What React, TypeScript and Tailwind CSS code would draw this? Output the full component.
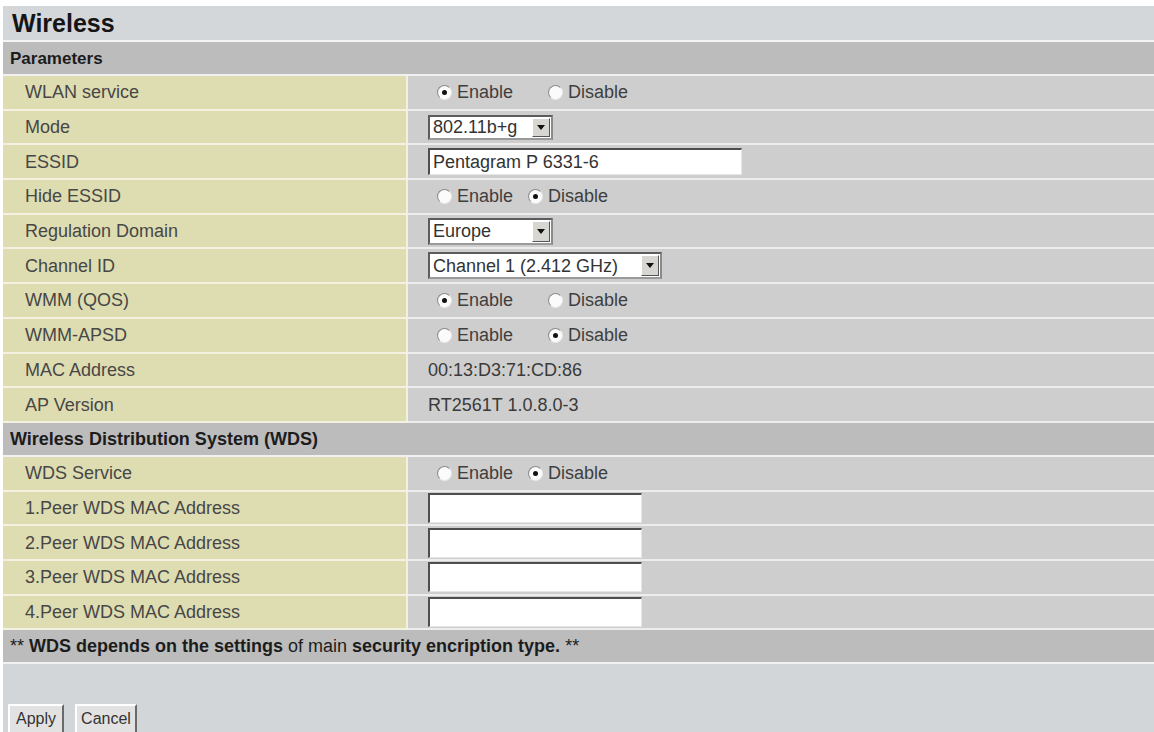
import type { ReactNode } from 'react'

function Radio({ checked }: { checked: boolean }) {
  return (
    <span className="w-[15px] h-[15px] shrink-0 rounded-full bg-[#fbfbfb] border border-t-[#8a8a8a] border-l-[#8a8a8a] border-r-[#e8e8e8] border-b-[#e8e8e8] flex items-center justify-center">
      {checked && <span className="w-[5px] h-[5px] rounded-full bg-[#111]" />}
    </span>
  )
}

function EnableDisable({ enabled, wide }: { enabled: boolean; wide?: boolean }) {
  return (
    <div className="flex items-center ml-[9px] text-[#3e3e3e]">
      <Radio checked={enabled} />
      <span className="ml-[5px]">Enable</span>
      <span className={wide ? 'ml-[35px]' : 'ml-[15px]'}>
        <Radio checked={!enabled} />
      </span>
      <span className="ml-[5px]">Disable</span>
    </div>
  )
}

function Select({ value, className }: { value: string; className: string }) {
  return (
    <div className={`flex items-stretch bg-white border-2 border-[#5c5c5c] border-b-[#9a9a9a] border-r-[#8a8a8a] ${className}`}>
      <span className="flex-1 flex items-center pl-[3px] text-[#333] whitespace-nowrap overflow-hidden">{value}</span>
      <span className="w-[18px] my-[1px] mr-[1px] bg-[#d8d6d0] border border-t-white border-l-white border-r-[#555] border-b-[#555] flex items-center justify-center">
        <svg width="8" height="5" viewBox="0 0 8 5">
          <path d="M0 0h8L4 5z" fill="#111" />
        </svg>
      </span>
    </div>
  )
}

function TextBox({ value, className }: { value?: string; className: string }) {
  return (
    <div className={`flex items-center bg-white border-t-2 border-l-2 border-[#4e4e4e] border-r border-b border-r-[#e6e6e6] border-b-[#e6e6e6] pl-[3px] text-[#333] ${className}`}>
      {value}
    </div>
  )
}

function Row({ label, children }: { label: string; children?: ReactNode }) {
  return (
    <div className="flex h-[34.7px]">
      <div className="w-[405px] shrink-0 flex items-center pl-[22px] bg-[#dedcb1] border-b-2 border-r-2 border-b-[#f3f2e2] border-r-[#f2f1dc] text-[#474747]">
        {label}
      </div>
      <div className="flex-1 flex items-center pl-[20px] bg-[#cecece] border-b-2 border-[#ededed] text-[#3a3a3a]">
        {children}
      </div>
    </div>
  )
}

function SectionBar({ children }: { children: ReactNode }) {
  return (
    <div className="h-[34px] flex items-center pl-[7px] bg-[#bcbcbc] border-b-2 border-[#f1f1f1] text-[#1c1c1c]">
      {children}
    </div>
  )
}

export default function App() {
  return (
    <div className="w-[1154px] h-[732px] overflow-hidden bg-white pt-[6px] pl-[3px] text-[18px] leading-none font-['Liberation_Sans',Arial,sans-serif]">
      <div className="h-[36px] flex items-center pl-[9px] bg-[#d3d7da] border-b-2 border-[#f4f4f4]">
        <span className="text-[25px] font-bold text-[#151515]">Wireless</span>
      </div>
      <SectionBar>
        <span className="font-bold text-[17px]">Parameters</span>
      </SectionBar>

      <Row label="WLAN service">
        <EnableDisable enabled wide />
      </Row>
      <Row label="Mode">
        <Select value="802.11b+g" className="w-[125px] h-[25px]" />
      </Row>
      <Row label="ESSID">
        <TextBox value="Pentagram P 6331-6" className="w-[314px] h-[27px]" />
      </Row>
      <Row label="Hide ESSID">
        <EnableDisable enabled={false} />
      </Row>
      <Row label="Regulation Domain">
        <Select value="Europe" className="w-[125px] h-[27px]" />
      </Row>
      <Row label="Channel ID">
        <Select value="Channel 1 (2.412 GHz)" className="w-[234px] h-[27px]" />
      </Row>
      <Row label="WMM (QOS)">
        <EnableDisable enabled wide />
      </Row>
      <Row label="WMM-APSD">
        <EnableDisable enabled={false} wide />
      </Row>
      <Row label="MAC Address">
        <span>00:13:D3:71:CD:86</span>
      </Row>
      <Row label="AP Version">
        <span>RT2561T 1.0.8.0-3</span>
      </Row>

      <SectionBar>
        <span className="font-bold">Wireless Distribution System (WDS)</span>
      </SectionBar>
      <Row label="WDS Service">
        <EnableDisable enabled={false} />
      </Row>
      <Row label="1.Peer WDS MAC Address">
        <TextBox className="w-[214px] h-[30px]" />
      </Row>
      <Row label="2.Peer WDS MAC Address">
        <TextBox className="w-[214px] h-[30px]" />
      </Row>
      <Row label="3.Peer WDS MAC Address">
        <TextBox className="w-[214px] h-[30px]" />
      </Row>
      <Row label="4.Peer WDS MAC Address">
        <TextBox className="w-[214px] h-[30px]" />
      </Row>

      <SectionBar>
        <span className="text-[18px]">
          ** <b>WDS depends on the settings</b> of main <b>security encription type.</b> **
        </span>
      </SectionBar>

      <div className="h-[80px] bg-[#d3d6d9] pt-[40px] pl-[5px] flex items-start gap-[11px]">
        <button className="h-[30px] w-[56px] bg-[#e2e2e2] border-2 border-t-white border-l-white border-r-[#6a6a6a] border-b-[#6a6a6a] text-[16px] text-[#333]">
          Apply
        </button>
        <button className="h-[30px] w-[62px] bg-[#e2e2e2] border-2 border-t-white border-l-white border-r-[#6a6a6a] border-b-[#6a6a6a] text-[16px] text-[#333]">
          Cancel
        </button>
      </div>
    </div>
  )
}
